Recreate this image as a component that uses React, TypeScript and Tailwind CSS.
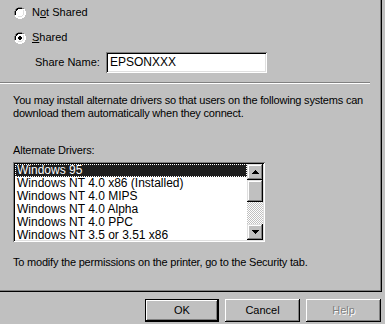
import React from 'react';

const drivers = [
  'Windows 95',
  'Windows NT 4.0 x86 (Installed)',
  'Windows NT 4.0 MIPS',
  'Windows NT 4.0 Alpha',
  'Windows NT 4.0 PPC',
  'Windows NT 3.5 or 3.51 x86',
];

function Radio({ checked }: { checked: boolean }) {
  return (
    <svg width="12" height="12" viewBox="0 0 12 12" className="shrink-0">
      <path d="M4 0h4v1h2v1h1v2h1v4h-1v2h-1v1h-2v1h-4v-1h-2v-1h-1v-2h-1v-4h1v-2h1v-1h2z" fill="#ffffff" />
      <path d="M4 0h4v1h2v1h-2v-1h-4v1h-2v2h-1v4h-1v-4h1v-2h1v-1h2z" fill="#808080" />
      <path d="M4 1h4v1h-4v1h-1v1h-1v4h-1v-4h1v-2h1v-1z" fill="#000000" />
      <path d="M10 2h1v2h1v4h-1v2h-1v1h-2v1h-4v-1h4v-1h2v-2h1v-4h-1z" fill="#ffffff" />
      <path d="M9 3h1v5h-1v1h-1v1h-4v-1h4v-1h1z" fill="#dfdfdf" />
      {checked && <path d="M5 4h2v1h1v2h-1v1h-2v-1h-1v-2h1z" fill="#000000" />}
    </svg>
  );
}

function Button({ label, isDefault, disabled }: { label: string; isDefault?: boolean; disabled?: boolean }) {
  return (
    <div
      className={
        isDefault
          ? 'flex h-[23px] w-[74px] items-center justify-center border border-black shadow-[inset_-1px_-1px_#000,inset_1px_1px_#fff,inset_-2px_-2px_#808080]'
          : 'flex h-[23px] w-[75px] items-center justify-center shadow-[inset_-1px_-1px_#000,inset_1px_1px_#fff,inset_-2px_-2px_#808080]'
      }
    >
      <span className={disabled ? 'text-[#808080] [text-shadow:1px_1px_#fff]' : 'text-black'}>{label}</span>
    </div>
  );
}

export default function App() {
  return (
    <div className="flex h-[324px] w-[385px] flex-col overflow-hidden bg-[#c0c0c0] font-['Liberation_Sans',Arial,sans-serif] text-[11px] leading-[13px] text-black">
      <div className="h-[292px] w-[382px] shrink-0 border-b border-r border-black shadow-[inset_-1px_-1px_#808080]">
        <div className="flex items-center gap-[6px] pl-[14px] pt-[6px]">
          <Radio checked={false} />
          <span>
            N<span className="underline">o</span>t Shared
          </span>
        </div>
        <div className="mt-[12px] flex items-center gap-[6px] pl-[14px]">
          <Radio checked={true} />
          <span>
            <span className="underline">S</span>hared
          </span>
        </div>
        <div className="mt-[8px] flex items-center pl-[35px]">
          <span className="w-[71px]">Share Name:</span>
          <div className="flex h-[21px] w-[161px] items-center bg-white pl-[4px] text-[12px] shadow-[inset_1px_1px_#808080,inset_-1px_-1px_#fff,inset_2px_2px_#000,inset_-2px_-2px_#dfdfdf]">
            EPSONXXX
          </div>
        </div>
        <div className="mt-[9px] h-[2px] w-[370px] border-t border-[#808080] border-b border-b-white" />
        <p className="mt-[10px] pl-[13px] pr-[6px] tracking-[-0.2px]">
          You may install alternate drivers so that users on the following systems can download them automatically
          when they connect.
        </p>
        <p className="mt-[24px] pl-[13px] tracking-[-0.2px]">Alternate Drivers:</p>
        <div className="ml-[13px] mt-[5px] flex h-[80px] w-[252px] bg-white p-[2px] text-[12px] shadow-[inset_1px_1px_#808080,inset_-1px_-1px_#fff,inset_2px_2px_#000,inset_-2px_-2px_#dfdfdf]">
          <ul className="flex-1">
            {drivers.map((d, i) => (
              <li
                key={d}
                className={
                  i === 0
                    ? 'h-[13px] border border-dotted border-white bg-[#1e1e1e] pl-[1px] leading-[11px] text-white'
                    : 'h-[13px] pl-[2px] leading-[13px]'
                }
              >
                {d}
              </li>
            ))}
          </ul>
          <div className="flex w-[16px] flex-col">
            <div className="flex h-[16px] items-center justify-center bg-[#c0c0c0] shadow-[inset_-1px_-1px_#000,inset_1px_1px_#dfdfdf,inset_-2px_-2px_#808080,inset_2px_2px_#fff]">
              <svg width="7" height="4" viewBox="0 0 7 4">
                <path d="M3 0h1v1h1v1h1v1h1v1h-7v-1h1v-1h1v-1h1z" fill="#000" />
              </svg>
            </div>
            <div className="h-[22px] bg-[#c0c0c0] shadow-[inset_-1px_-1px_#000,inset_1px_1px_#dfdfdf,inset_-2px_-2px_#808080,inset_2px_2px_#fff]" />
            <div className="flex-1 bg-[repeating-conic-gradient(#c0c0c0_0_25%,#fff_0_50%)] bg-[length:2px_2px]" />
            <div className="flex h-[16px] items-center justify-center bg-[#c0c0c0] shadow-[inset_-1px_-1px_#000,inset_1px_1px_#dfdfdf,inset_-2px_-2px_#808080,inset_2px_2px_#fff]">
              <svg width="7" height="4" viewBox="0 0 7 4">
                <path d="M0 0h7v1h-1v1h-1v1h-1v1h-1v-1h-1v-1h-1v-1h-1z" fill="#000" />
              </svg>
            </div>
          </div>
        </div>
        <p className="mt-[14px] pl-[13px] tracking-[-0.2px]">
          To modify the permissions on the printer, go to the Security tab.
        </p>
      </div>
      <div className="mt-[7px] flex justify-end gap-[6px] pr-[4px]">
        <Button label="OK" isDefault />
        <Button label="Cancel" />
        <Button label="Help" disabled />
      </div>
    </div>
  );
}
